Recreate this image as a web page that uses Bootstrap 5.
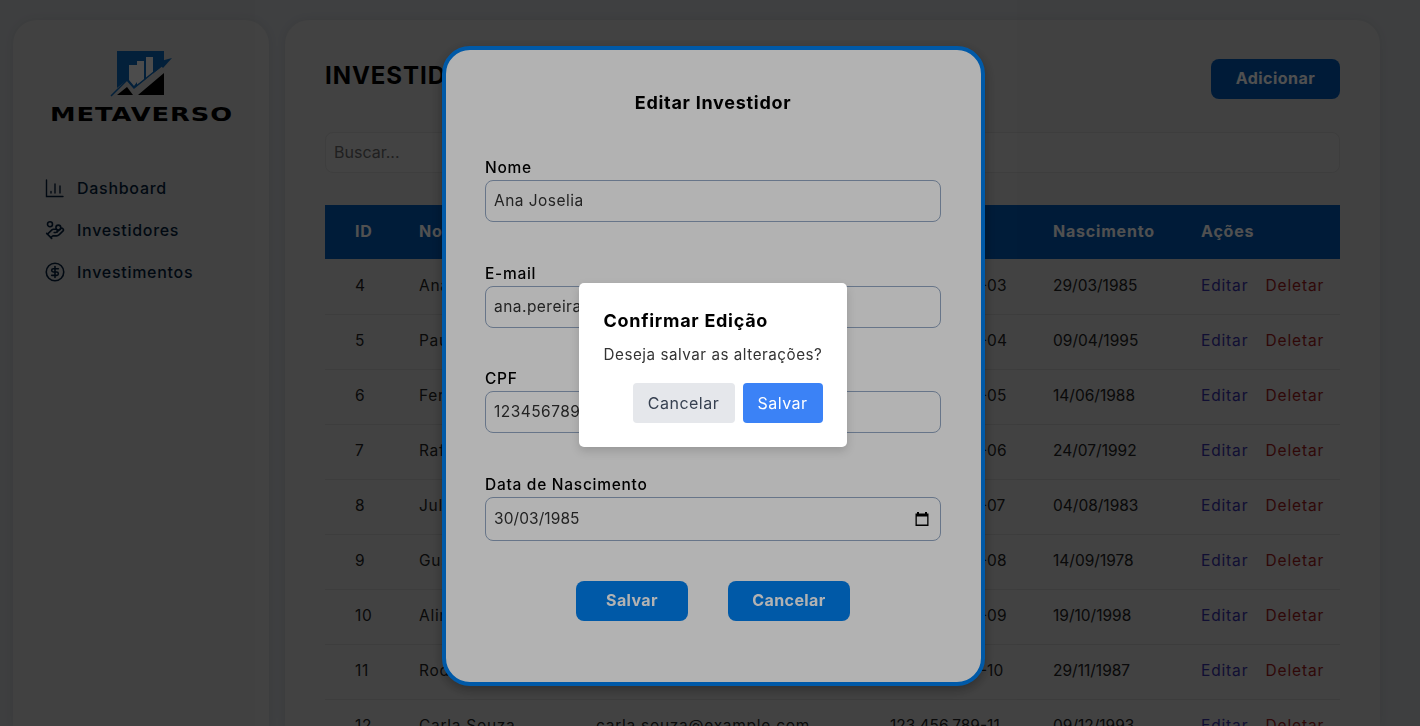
<!DOCTYPE html>
<html lang="pt-BR">
<head>
    <meta charset="UTF-8">
    <meta name="viewport" content="width=device-width, initial-scale=1.0">
    <title>Metaverso - Investidores</title>
    <link href="https://cdn.jsdelivr.net/npm/bootstrap@5.3.0/dist/css/bootstrap.min.css" rel="stylesheet">
    <style>
        /* General */
        html, body { height: 100%; overflow: hidden; }
        body {
            font-family: Inter, "Noto Sans", sans-serif;
            background: #c5c8cc;
            color: #111;
            letter-spacing: .045em;
        }
        .page-wrap { padding: 20px 40px 0 13px; gap: 16px; height: 726px; }
        .side-panel {
            width: 256px;
            flex: none;
            background: #cfcfcf;
            border-radius: 24px 24px 0 0;
            box-shadow: 0 0 10px rgba(0,0,0,.08);
            padding: 31px 32px 0;
        }
        .main-panel {
            flex: 1;
            background: #cfcfcf;
            border-radius: 24px 24px 0 0;
            box-shadow: 0 0 10px rgba(0,0,0,.08);
            padding: 36px 40px 0;
            min-width: 0;
            overflow: hidden;
        }

        /* Sidebar */
        .logo-box { height: 72px; }
        .side-nav { margin-top: 53px; gap: 18px; }
        .side-link {
            color: #061f3c;
            font-size: 16px;
            font-weight: 500;
            text-decoration: none;
            height: 24px;
            gap: 12px;
        }
        .side-link svg { width: 20px; height: 20px; flex: none; }

        /* Main */
        .page-title { font-size: 24px; font-weight: 700; margin: 0; padding-top: 4px; letter-spacing: .04em; color: #000; line-height: 32px; }
        .btn-add {
            width: 129px;
            height: 40px;
            margin-top: 3px;
            background: #0058b4;
            color: #fff;
            font-weight: 700;
            font-size: 16px;
            border-radius: 8px;
            border: 0;
            letter-spacing: .03em;
            padding: 0 0 2px;
        }
        .search-box {
            margin-top: 33px;
            height: 41px;
            background: #d3d3d3;
            border: 1px solid #c2c2c2;
            border-radius: 8px;
            font-size: 16px;
            padding: 0 0 2px 8px;
            color: #333;
        }
        .search-box::placeholder { color: #666; }
        .data-table { margin-top: 32px; width: 1015px; table-layout: fixed; font-size: 15.5px; border-collapse: collapse; }
        .data-table th {
            background: #0058b4;
            color: #fff;
            font-weight: 700;
            height: 54px;
            padding: 0 0 2px 30px;
            vertical-align: middle;
            white-space: nowrap;
            font-size: 16px;
            letter-spacing: .05em;
        }
        .data-table td {
            height: 55px;
            padding: 0 0 2px 30px;
            vertical-align: middle;
            border-bottom: 1px solid #c0c0c0;
            color: #222;
            white-space: nowrap;
            background: #d1d1d1;
        }
        .data-table .num-cell { letter-spacing: 0; }
        .w-id { width: 64px; } .w-nome { width: 177px; } .w-mail { width: 294px; }
        .w-cpf { width: 163px; } .w-nasc { width: 148px; } .w-acao { width: 169px; }
        .act-edit { color: #3730a3; text-decoration: none; margin-right: 12px; letter-spacing: .055em; }
        .act-del { color: #991b1b; text-decoration: none; letter-spacing: .055em; }

        /* Overlays */
        .shade {
            position: fixed;
            inset: 0;
            display: flex;
            align-items: center;
            justify-content: center;
            padding-left: 7px;
        }
        .shade-one { background: rgba(0,0,0,.55); }
        .shade-two { background: rgba(0,0,0,.3); }
        .edit-box {
            width: 543px;
            height: 640px;
            margin-top: 5px;
            background: #fff;
            border: 4px solid #0080f0;
            border-radius: 28px;
            padding: 41px 40px 0 39px;
            box-shadow: 0 4px 12px rgba(0,0,0,.3);
        }
        .edit-title { font-size: 18px; font-weight: 700; text-align: center; margin: 0 0 43px; line-height: 24px; color: #000; }
        .field-block { margin-bottom: 42px; position: relative; }
        .field-tight { margin-bottom: 41px; }
        .field-last { margin-bottom: 0; }
        .field-label { font-size: 15.5px; font-weight: 500; display: block; line-height: 20px; margin-bottom: 2px; color: #000; }
        .field-input {
            width: 100%;
            height: 42px;
            border: 1px solid #94a8c4;
            border-radius: 8px;
            padding: 0 8px;
            font-size: 15.5px;
            color: #333;
            background: #fff;
            letter-spacing: .03em;
        }
        .field-date { height: 44px; letter-spacing: .005em; }
        .date-icon { position: absolute; right: 11px; bottom: 14px; width: 16px; height: 16px; }
        .edit-actions { gap: 40px; margin-top: 40px; }
        .btn-edit {
            height: 40px;
            background: #0080f0;
            color: #fff;
            font-weight: 700;
            font-size: 16px;
            border: 0;
            border-radius: 8px;
            padding: 0 0 2px;
            letter-spacing: .025em;
        }
        .btn-w1 { width: 112px; } .btn-w2 { width: 122px; }
        .confirm-box {
            width: 268px;
            height: 164px;
            margin: 4px 2px 0 0;
            background: #fff;
            border-radius: 5px;
            padding: 25px 24px 24px 25px;
            box-shadow: 0 4px 10px rgba(0,0,0,.15);
        }
        .confirm-title { font-size: 18px; font-weight: 700; line-height: 26px; margin: 0 0 9px; color: #000; }
        .confirm-text { font-size: 15.2px; line-height: 24px; margin: 0 0 16px; color: #333; white-space: nowrap; letter-spacing: .035em; }
        .confirm-actions { gap: 8px; }
        .btn-soft {
            height: 40px;
            border: 0;
            border-radius: 4px;
            padding: 0;
            font-size: 16px;
            letter-spacing: .03em;
        }
        .btn-gray { width: 102px; background: #e5e7eb; color: #374151; }
        .btn-blue { width: 80px; background: #3b82f6; color: #fff; }
    </style>
</head>
<body>
    <div class="d-flex page-wrap">
        <!-- Sidebar -->
        <aside class="side-panel">
            <div class="logo-box">
                <svg width="192" height="72" viewBox="0 0 192 72">
                    <rect x="72" y="0" width="47" height="44" fill="#0b66b8"/>
                    <path d="M72 44V37L82 29l7 8 30-23V44Z" fill="#cfcfcf"/>
                    <path d="M72 44l10-8 6 8ZM93 44l26-22v22Z" fill="#000"/>
                    <path d="M84 14h8v17l-3 4-5-6ZM92 10h7v19l-7 5ZM101 6h7v17l-7 5Z" fill="#f2f2f2"/>
                    <path d="M66 45 82 29l7 8 26-21" fill="none" stroke="#0b66b8" stroke-width="1.5"/>
                    <path d="M127 7l-15 4 6 6Z" fill="#0b66b8"/>
                    <text x="5" y="70" textLength="183" lengthAdjust="spacingAndGlyphs" font-family="DejaVu Sans" font-weight="700" font-size="19.5" fill="#000">METAVERSO</text>
                </svg>
            </div>
            <nav class="d-flex flex-column side-nav">
                <a class="d-flex align-items-center side-link" href="#">
                    <svg viewBox="0 0 20 20" fill="none" stroke="#061f3c" stroke-width="1.4" stroke-linecap="round"><path d="M1.500 2v16.500h16.500"/><path d="M6 13.500v1.500M10 6v9M15 8v7"/></svg>
                    Dashboard
                </a>
                <a class="d-flex align-items-center side-link" href="#">
                    <svg viewBox="0 0 24 24" fill="none" stroke="#061f3c" stroke-width="1.9" stroke-linecap="round" stroke-linejoin="round"><path d="M11 15h2a2 2 0 1 0 0-4h-3c-.6 0-1.100.2-1.400.6L3 17"/><path d="m7 21 1.600-1.400c.3-.4.8-.6 1.400-.6h4c1.100 0 2.100-.4 2.800-1.200l4.600-4.400a2 2 0 0 0-2.750-2.910l-4.200 3.900"/><path d="m2 16 6 6"/><circle cx="16" cy="9" r="2.900"/><circle cx="6" cy="5" r="3"/></svg>
                    Investidores
                </a>
                <a class="d-flex align-items-center side-link" href="#">
                    <svg viewBox="0 0 24 24" fill="none" stroke="#061f3c" stroke-width="1.9" stroke-linecap="round" stroke-linejoin="round"><circle cx="12" cy="12" r="10.500"/><path d="M16 8h-6a2 2 0 1 0 0 4h4a2 2 0 1 1 0 4H8"/><path d="M12 18.500v-13"/></svg>
                    Investimentos
                </a>
            </nav>
        </aside>

        <!-- Main -->
        <main class="main-panel">
            <div class="d-flex justify-content-between align-items-start">
                <h1 class="page-title">INVESTIDORES</h1>
                <button class="btn-add">Adicionar</button>
            </div>
            <input class="d-block w-100 search-box" placeholder="Buscar...">
            <table class="data-table">
                <thead>
                    <tr>
                        <th class="w-id">ID</th><th class="w-nome">Nome</th><th class="w-mail">E-mail</th>
                        <th class="w-cpf">CPF</th><th class="w-nasc">Nascimento</th><th class="w-acao">Ações</th>
                    </tr>
                </thead>
                <tbody id="rows"></tbody>
            </table>
        </main>
    </div>

    <!-- Edit dialog -->
    <div class="shade shade-one">
        <div class="edit-box">
            <h2 class="edit-title">Editar Investidor</h2>
            <div class="field-block"><label class="field-label">Nome</label><input class="field-input" value="Ana Joselia"></div>
            <div class="field-block field-tight"><label class="field-label">E-mail</label><input class="field-input" value="ana.pereira@example.com"></div>
            <div class="field-block"><label class="field-label">CPF</label><input class="field-input" value="12345678903"></div>
            <div class="field-block field-last">
                <label class="field-label">Data de Nascimento</label>
                <input class="field-input field-date" value="30/03/1985">
                <svg class="date-icon" viewBox="0 0 16 16"><path d="M3 1h2v1.500h6V1h2v1.500h1.500V15h-13V2.500H3Zm-.2 4.500v8h10.400v-8Z" fill="#000"/></svg>
            </div>
            <div class="d-flex justify-content-center edit-actions">
                <button class="btn-edit btn-w1">Salvar</button>
                <button class="btn-edit btn-w2">Cancelar</button>
            </div>
        </div>
    </div>

    <!-- Confirm dialog -->
    <div class="shade shade-two">
        <div class="confirm-box">
            <h3 class="confirm-title">Confirmar Edição</h3>
            <p class="confirm-text">Deseja salvar as alterações?</p>
            <div class="d-flex justify-content-end confirm-actions">
                <button class="btn-soft btn-gray">Cancelar</button>
                <button class="btn-soft btn-blue">Salvar</button>
            </div>
        </div>
    </div>

    <script>
        const investors = [
            [4, "Ana Pereira", "ana.pereira@example.com", "123.456.789-03", "29/03/1985"],
            [5, "Paulo Lima", "paulo.lima@example.com", "123.456.789-04", "09/04/1995"],
            [6, "Fernanda Alves", "fernanda.alves@example.com", "123.456.789-05", "14/06/1988"],
            [7, "Rafael Costa", "rafael.costa@example.com", "123.456.789-06", "24/07/1992"],
            [8, "Juliana Rocha", "juliana.rocha@example.com", "123.456.789-07", "04/08/1983"],
            [9, "Gustavo Dias", "gustavo.dias@example.com", "123.456.789-08", "14/09/1978"],
            [10, "Aline Martins", "aline.martins@example.com", "123.456.789-09", "19/10/1998"],
            [11, "Rodrigo Nunes", "rodrigo.nunes@example.com", "123.456.789-10", "29/11/1987"],
            [12, "Carla Souza", "carla.souza@example.com", "123.456.789-11", "09/12/1993"]
        ];
        document.getElementById("rows").innerHTML = investors.map(r =>
            "<tr>" + r.map((v, i) => '<td class="' + (i > 2 ? "num-cell" : "") + '">' + v + "</td>").join("") +
            '<td><a class="act-edit" href="#">Editar</a> <a class="act-del" href="#">Deletar</a></td></tr>'
        ).join("");
    </script>
    <script src="https://cdn.jsdelivr.net/npm/bootstrap@5.3.0/dist/js/bootstrap.bundle.min.js"></script>
</body>
</html>
